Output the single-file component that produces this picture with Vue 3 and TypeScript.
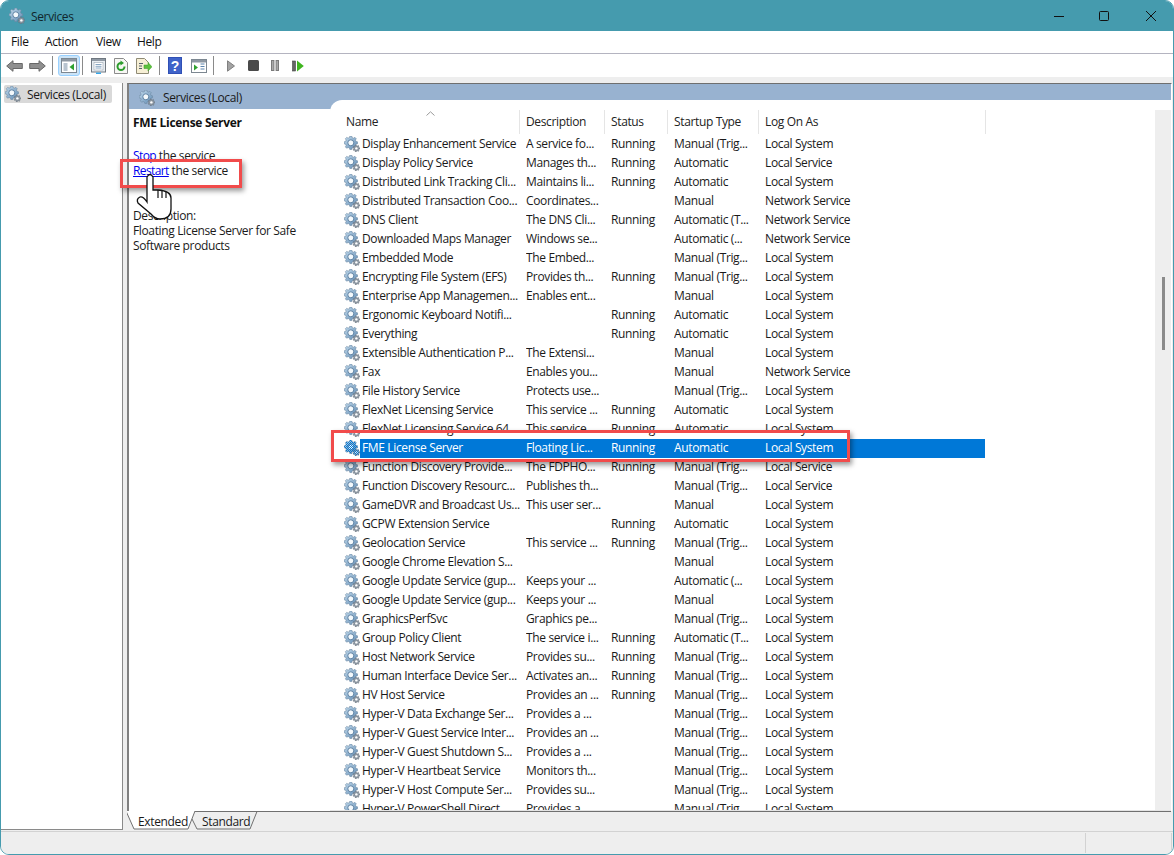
<script setup lang="ts">
interface Row { n: string; d: string; s: string; t: string; l: string }
const LS = 'Local System', LV = 'Local Service', NS = 'Network Service', R = 'Running', A = 'Automatic', M = 'Manual', MT = 'Manual (Trig...'
const rows: Row[] = [
  { n: 'Display Enhancement Service', d: 'A service fo...', s: R, t: MT, l: LS },
  { n: 'Display Policy Service', d: 'Manages th...', s: R, t: A, l: LV },
  { n: 'Distributed Link Tracking Cli...', d: 'Maintains li...', s: R, t: A, l: LS },
  { n: 'Distributed Transaction Coo...', d: 'Coordinates...', s: '', t: M, l: NS },
  { n: 'DNS Client', d: 'The DNS Cli...', s: R, t: 'Automatic (T...', l: NS },
  { n: 'Downloaded Maps Manager', d: 'Windows se...', s: '', t: 'Automatic (...', l: NS },
  { n: 'Embedded Mode', d: 'The Embed...', s: '', t: MT, l: LS },
  { n: 'Encrypting File System (EFS)', d: 'Provides th...', s: R, t: MT, l: LS },
  { n: 'Enterprise App Managemen...', d: 'Enables ent...', s: '', t: M, l: LS },
  { n: 'Ergonomic Keyboard Notifi...', d: '', s: R, t: A, l: LS },
  { n: 'Everything', d: '', s: R, t: A, l: LS },
  { n: 'Extensible Authentication P...', d: 'The Extensi...', s: '', t: M, l: LS },
  { n: 'Fax', d: 'Enables you...', s: '', t: M, l: NS },
  { n: 'File History Service', d: 'Protects use...', s: '', t: MT, l: LS },
  { n: 'FlexNet Licensing Service', d: 'This service ...', s: R, t: A, l: LS },
  { n: 'FlexNet Licensing Service 64', d: 'This service ...', s: R, t: A, l: LS },
  { n: 'FME License Server', d: 'Floating Lic...', s: R, t: A, l: LS },
  { n: 'Function Discovery Provide...', d: 'The FDPHO...', s: R, t: MT, l: LV },
  { n: 'Function Discovery Resourc...', d: 'Publishes th...', s: '', t: MT, l: LV },
  { n: 'GameDVR and Broadcast Us...', d: 'This user ser...', s: '', t: M, l: LS },
  { n: 'GCPW Extension Service', d: '', s: R, t: A, l: LS },
  { n: 'Geolocation Service', d: 'This service ...', s: R, t: MT, l: LS },
  { n: 'Google Chrome Elevation S...', d: '', s: '', t: M, l: LS },
  { n: 'Google Update Service (gup...', d: 'Keeps your ...', s: '', t: 'Automatic (...', l: LS },
  { n: 'Google Update Service (gup...', d: 'Keeps your ...', s: '', t: M, l: LS },
  { n: 'GraphicsPerfSvc', d: 'Graphics pe...', s: '', t: MT, l: LS },
  { n: 'Group Policy Client', d: 'The service i...', s: R, t: 'Automatic (T...', l: LS },
  { n: 'Host Network Service', d: 'Provides su...', s: R, t: MT, l: LS },
  { n: 'Human Interface Device Ser...', d: 'Activates an...', s: R, t: MT, l: LS },
  { n: 'HV Host Service', d: 'Provides an ...', s: R, t: MT, l: LS },
  { n: 'Hyper-V Data Exchange Ser...', d: 'Provides a ...', s: '', t: MT, l: LS },
  { n: 'Hyper-V Guest Service Inter...', d: 'Provides an ...', s: '', t: MT, l: LS },
  { n: 'Hyper-V Guest Shutdown S...', d: 'Provides a ...', s: '', t: MT, l: LS },
  { n: 'Hyper-V Heartbeat Service', d: 'Monitors th...', s: '', t: MT, l: LS },
  { n: 'Hyper-V Host Compute Ser...', d: 'Provides su...', s: '', t: MT, l: LS },
  { n: 'Hyper-V PowerShell Direct ...', d: 'Provides a ...', s: '', t: MT, l: LS },
]
const selected = 'FME License Server'

function gear(cx: number, cy: number, ro: number, ri: number, teeth: number): string {
  const pts: string[] = []
  const step = (Math.PI * 2) / teeth
  for (let i = 0; i < teeth; i++) {
    const a = i * step
    const p = (ang: number, r: number) => `${(cx + Math.cos(ang) * r).toFixed(2)} ${(cy + Math.sin(ang) * r).toFixed(2)}`
    pts.push(p(a - step * 0.32, ri), p(a - step * 0.18, ro), p(a + step * 0.18, ro), p(a + step * 0.32, ri))
  }
  return 'M' + pts.join('L') + 'Z'
}
const bigGear = gear(6.8, 6.8, 6.8, 5.4, 8)
const smallGear = gear(12.4, 12.4, 3.5, 2.6, 7)
</script>

<template>
  <div class="app">
    <svg class="defs" width="0" height="0">
      <defs>
        <linearGradient id="gearFill" x1="0" y1="0" x2="1" y2="1">
          <stop offset="0" stop-color="#c4dcee" />
          <stop offset="1" stop-color="#5f8ab2" />
        </linearGradient>
        <symbol id="svc" viewBox="0 0 16 16">
          <path :d="bigGear" fill="url(#gearFill)" stroke="#6f8aa3" stroke-width="0.6" />
          <circle cx="6.8" cy="6.8" r="3" fill="#f4f9fc" stroke="#55799c" stroke-width="0.9" />
          <path :d="smallGear" fill="#8d98a3" stroke="#5a6672" stroke-width="0.4" />
          <circle cx="12.4" cy="12.4" r="1.2" fill="#fff" />
        </symbol>
        <pattern id="dither" width="2" height="2" patternUnits="userSpaceOnUse">
          <rect width="1" height="1" fill="#0078d7" />
          <rect x="1" y="1" width="1" height="1" fill="#0078d7" />
        </pattern>
      </defs>
    </svg>

    <div class="window">
      <header class="title">
        <svg class="title-ico" width="16" height="16"><use href="#svc" /></svg>
        <span class="title-text">Services</span>
        <div class="controls">
          <svg width="12" height="12" viewBox="0 0 12 12" class="min"><path d="M1 6.5H11" stroke="#111" stroke-width="1" /></svg>
          <svg width="12" height="12" viewBox="0 0 12 12" class="max"><rect x="1.5" y="1.5" width="9" height="9" rx="1" fill="none" stroke="#111" stroke-width="1" /></svg>
          <svg width="12" height="12" viewBox="0 0 12 12" class="close"><path d="M1 1L11 11M11 1L1 11" stroke="#111" stroke-width="1" /></svg>
        </div>
      </header>

      <nav class="menu">
        <span>File</span><span>Action</span><span>View</span><span>Help</span>
      </nav>

      <div class="toolbar">
        <div class="tb ga">
          <button class="btn"><svg width="17" height="12" viewBox="0 0 17 12"><path d="M.7 6L7 .7V3.5H16.3V8.5H7V11.3Z" fill="#8f8f8f" stroke="#686868" /></svg></button>
          <button class="btn"><svg width="17" height="12" viewBox="0 0 17 12"><path d="M16.3 6L10 .7V3.5H.7V8.5H10V11.3Z" fill="#8f8f8f" stroke="#686868" /></svg></button>
        </div>
        <i class="sep"></i>
        <div class="tb gb">
          <button class="btn active">
            <svg width="16" height="15" viewBox="0 0 16 15"><rect x=".5" y=".5" width="15" height="14" fill="#fff" stroke="#7c8791" /><rect x="1" y="1" width="14" height="2.5" fill="#8e98a3" /><rect x="2.5" y="5" width="4" height="8" fill="#b8c4d0" /><path d="M13 5.5V12.5L8.5 9Z" fill="#2fa12f" /></svg>
          </button>
        </div>
        <i class="sep"></i>
        <div class="tb gc">
          <button class="btn">
            <svg width="15" height="16" viewBox="0 0 15 16"><rect x=".5" y=".5" width="14" height="13.5" fill="#e8edf1" stroke="#6f7780" /><rect x="1" y="1" width="13" height="2" fill="#8e98a3" /><rect x="3" y="4.5" width="9" height="7.5" fill="#fff" stroke="#9aa6b1" stroke-width=".6" /><path d="M4.5 6.5H10.5M4.5 8.3H10.5M4.5 10H10.5" stroke="#6a8fb3" stroke-width=".8" /><rect x="5" y="14.5" width="5" height="1.5" fill="#37a6e8" /></svg>
          </button>
          <button class="btn">
            <svg width="14" height="16" viewBox="0 0 14 16"><path d="M.5 .5H9.5L13.5 4.5V15.5H.5Z" fill="#f7f7f4" stroke="#8b8b8b" /><path d="M10.5 8.5A3.5 3.5 0 1 1 7 5" fill="none" stroke="#2c9c2c" stroke-width="2" /><path d="M6.5 2.5L10 5L6.5 7.5Z" fill="#2c9c2c" /></svg>
          </button>
          <button class="btn">
            <svg width="16" height="16" viewBox="0 0 16 16"><path d="M.5 .5H8.5L12.5 4.5V15.5H.5Z" fill="#f6efd5" stroke="#8f8a75" /><path d="M3 5.5H7M3 8H6M3 10.5H6" stroke="#55606b" stroke-width="1" /><path d="M8 7H12V4.5L16 8.8L12 13V10.5H8Z" fill="#5cc23c" stroke="#3d9a28" stroke-width=".5" /></svg>
          </button>
        </div>
        <i class="sep"></i>
        <div class="tb gd">
          <button class="btn">
            <svg width="14" height="17" viewBox="0 0 14 17"><rect width="14" height="17" fill="#2f4fb5" /><rect x="1" y="1" width="12" height="15" fill="#3f63c9" /><text x="7" y="13.5" text-anchor="middle" class="qm">?</text></svg>
          </button>
          <button class="btn">
            <svg width="16" height="14" viewBox="0 0 16 14"><rect x=".5" y=".5" width="15" height="13" fill="#fff" stroke="#7c8791" /><rect x="1" y="1" width="14" height="2.5" fill="#8e98a3" /><path d="M3 5.5V11.5L7 8.5Z" fill="#2fa12f" /><path d="M9.5 5H13.5M9.5 7.5H13.5M9.5 10H13.5" stroke="#5b84ad" stroke-width="1.2" /></svg>
          </button>
        </div>
        <i class="sep"></i>
        <div class="tb ge">
          <button class="btn"><svg width="8" height="12" viewBox="0 0 8 12"><path d="M.5 .8L7.5 6L.5 11.2Z" fill="#a3a3a3" stroke="#808080" /></svg></button>
          <button class="btn"><svg width="11" height="11" viewBox="0 0 11 11"><rect width="11" height="11" rx="1.5" fill="#4a4a4a" /></svg></button>
          <button class="btn"><svg width="8" height="11" viewBox="0 0 8 11"><rect x=".5" y=".5" width="2.4" height="10" fill="#a8a8a8" stroke="#7a7a7a" /><rect x="5.1" y=".5" width="2.4" height="10" fill="#a8a8a8" stroke="#7a7a7a" /></svg></button>
          <button class="btn wide"><svg width="12" height="12" viewBox="0 0 12 12"><rect x=".5" y="1" width="3" height="10" fill="#666" stroke="#444" stroke-width=".6" /><path d="M5 .5L11.8 6L5 11.5Z" fill="#3fb51f" /></svg></button>
        </div>
      </div>

      <main class="main">
        <aside class="tree">
          <div class="tree-item">
            <svg width="16" height="16"><use href="#svc" /></svg>
            <span>Services (Local)</span>
          </div>
        </aside>

        <section class="pane">
          <div class="inner">
            <div class="band">
              <svg width="16" height="16"><use href="#svc" /></svg>
              <span>Services (Local)</span>
            </div>
            <div class="content">
              <div class="details">
                <h1>FME License Server</h1>
                <p class="actions">
                  <span><a class="lnk">Stop</a> the service</span>
                  <span><a class="lnk">Restart</a> the service</span>
                </p>
                <p class="desc">
                  <span>Description:</span>
                  <span>Floating License Server for Safe</span>
                  <span>Software products</span>
                </p>
              </div>
              <div class="listpane">
                <div class="list">
                  <div class="head">
                    <span class="caret"><svg width="9" height="5" viewBox="0 0 9 5"><path d="M.5 4.5L4.5 .8L8.5 4.5" fill="none" stroke="#9a9a9a" /></svg></span>
                    <div class="hc h1">Name</div>
                    <div class="hc h2">Description</div>
                    <div class="hc h3">Status</div>
                    <div class="hc h4">Startup Type</div>
                    <div class="hc h5">Log On As</div>
                  </div>
                  <div class="rows">
                    <div v-for="(r, i) in rows" :key="i" class="row">
                      <div class="ic">
                        <svg width="16" height="16" viewBox="0 0 16 16">
                          <use href="#svc" width="16" height="16" />
                          <template v-if="r.n === selected">
                            <path :d="bigGear" fill="url(#dither)" />
                            <path :d="smallGear" fill="url(#dither)" />
                          </template>
                        </svg>
                      </div>
                      <div class="cells" :class="{ sel: r.n === selected }">
                        <span class="c1">{{ r.n }}</span>
                        <span class="c2">{{ r.d }}</span>
                        <span class="c3">{{ r.s }}</span>
                        <span class="c4">{{ r.t }}</span>
                        <span class="c5">{{ r.l }}</span>
                      </div>
                    </div>
                  </div>
                </div>
                <div class="track"><div class="thumb"></div></div>
              </div>
            </div>
          </div>
          <div class="tabs">
            <svg class="tab-lines" width="1044" height="19" viewBox="0 0 1044 19">
              <path d="M-1 0L7 18H61L68 0Z" fill="#fff" />
              <path d="M-1 0L7 18H61L68 0" fill="none" stroke="#707070" />
              <path d="M65 8L70 18H123L130 .5H1044" fill="none" stroke="#707070" />
              <path d="M68 .5H130" stroke="#707070" />
            </svg>
            <span class="tab t1">Extended</span>
            <span class="tab t2">Standard</span>
          </div>
        </section>
      </main>

      <footer class="status">
        <div class="st s1"></div>
        <div class="st s2"></div>
      </footer>
    </div>

    <div class="hl hl1"></div>
    <div class="hl hl2"></div>
    <svg class="hand" width="40" height="50" viewBox="0 0 40 50">
      <path d="M12 4Q15 -1 18 4L18 17L23 17Q36 18 36 25L36 36Q36 46 25 46Q20 46 16 41L3 30Q1 26 5 24Q8 23 12 29Z" fill="#fff" stroke="#111" stroke-width="1.3" />
      <path d="M23 17V25M27 18V25M31 19V25" fill="none" stroke="#111" stroke-width="1.2" />
    </svg>
  </div>
</template>

<style scoped>
.app {
  position: relative;
  width: 1174px;
  height: 855px;
  font-family: "Open Sans", "Noto Sans", sans-serif;
  font-size: 12px;
  letter-spacing: -0.36px;
  color: #1a1a1a;
  background: #fff;
  overflow: hidden;
}
.defs { position: absolute; }
.window {
  box-sizing: border-box;
  width: 100%;
  height: 100%;
  border: 1px solid #459bae;
  border-radius: 9px;
  overflow: hidden;
  display: flex;
  flex-direction: column;
  background: #eeeeee;
}
.title {
  height: 30px;
  flex: none;
  background: #459bae;
  display: flex;
  align-items: center;
  padding-left: 8px;
}
.title-text { margin-left: 6px; color: #10262c; }
.controls { margin-left: auto; display: flex; align-items: center; margin-right: 16px; }
.controls svg { display: block; }
.min { margin-right: 33px; }
.max { margin-right: 35px; }
.menu {
  box-sizing: border-box;
  height: 23px;
  flex: none;
  background: #fff;
  border-bottom: 1px solid #b4b4c0;
  display: flex;
  align-items: center;
  padding: 0 0 1px 10px;
  color: #111;
}
.menu span { display: block; }
.menu span:nth-child(1) { width: 34px; }
.menu span:nth-child(2) { width: 51px; }
.menu span:nth-child(3) { width: 41px; }
.toolbar {
  height: 23px;
  flex: none;
  background: #fff;
  display: flex;
  align-items: center;
  padding-left: 2px;
}
.tb { display: flex; gap: 1px; }
.btn {
  width: 22px;
  height: 21px;
  padding: 0;
  border: 0;
  background: none;
  display: flex;
  align-items: center;
  justify-content: center;
}
.btn.wide { width: 24px; }
.btn svg { display: block; }
.active {
  background: #cce4f7;
  border: 1px solid #99d1ff;
  border-radius: 3px;
  box-sizing: border-box;
}
.sep { width: 1px; height: 19px; background: #8a8a8a; display: block; }
.ga { margin-right: 4px; }
.gb { margin: 0 2px 0 5px; }
.gc { margin: 0 4px; }
.gd { margin: 0 3px 0 4px; gap: 2px; }
.ge { margin-left: 6px; gap: 0; }
.qm { font: bold 14px "Liberation Sans", sans-serif; fill: #fff; }
.main {
  flex: 1;
  min-height: 0;
  display: flex;
  padding: 6px 1px 0 0;
  background: #eeeeee;
}
.tree {
  box-sizing: border-box;
  width: 122px;
  margin-bottom: 1px;
  background: #fff;
  border-right: 1px solid #8a8a8a;
  border-bottom: 1px solid #8a8a8a;
  padding: 2px 0 0 3px;
  flex: none;
}
.tree-item {
  width: 108px;
  height: 18px;
  background: #d9d9d9;
  border-radius: 2px;
  display: flex;
  align-items: center;
  gap: 6px;
  padding-left: 1px;
  box-sizing: border-box;
}
.pane {
  flex: 1;
  min-width: 0;
  margin-left: 4px;
  display: flex;
  flex-direction: column;
}
.inner {
  flex: 1;
  min-height: 0;
  display: flex;
  flex-direction: column;
  border-top: 1px solid #6f6f6f;
  border-left: 2px solid #808080;
  border-right: 1px solid #fff;
}
.band {
  height: 25px;
  flex: none;
  margin-bottom: -9px;
  background: #98b2d0;
  display: flex;
  align-items: center;
  padding: 2px 0 0 10px;
  box-sizing: border-box;
  gap: 8px;
}
.content {
  flex: 1;
  min-height: 0;
  display: flex;
}
.details {
  width: 201px;
  flex: none;
  margin-top: 9px;
  background: #fff;
  padding: 6px 0 0 4px;
  box-sizing: border-box;
  line-height: 15px;
}
.details h1 {
  margin: 0;
  font-size: 12px;
  font-weight: 700;
  letter-spacing: -0.3px;
  line-height: 16px;
  color: #111;
}
.details p { margin: 0; display: flex; flex-direction: column; }
.actions { margin-top: 17px !important; }
.desc { margin-top: 30px !important; }
.lnk { color: #0000ee; text-decoration: underline; letter-spacing: -0.6px; }
.listpane {
  position: relative;
  flex: 1;
  min-width: 0;
  background: #fff;
  border-top-left-radius: 12px;
  padding-top: 10px;
  display: flex;
  border-bottom: 1px solid #e4e4e4;
  overflow: hidden;
}
.list {
  flex: 1;
  min-width: 0;
  display: flex;
  flex-direction: column;
}
.head {
  position: relative;
  height: 25px;
  flex: none;
  display: flex;
  padding-left: 10px;
}
.caret { position: absolute; left: 96px; top: 1px; line-height: 0; }
.hc {
  box-sizing: border-box;
  height: 24px;
  border-right: 1px solid #e5e5e5;
  padding: 3px 0 0 6px;
  line-height: 18px;
  color: #222;
}
.h1 { width: 180px; }
.h2 { width: 85px; }
.h3 { width: 63px; }
.h4 { width: 91px; }
.h5 { width: 227px; }
.rows { flex: 1; min-height: 0; overflow: hidden; }
.row { display: flex; height: 19px; }
.ic { width: 30px; flex: none; padding: 1px 0 0 14px; box-sizing: border-box; }
.ic svg { display: block; }
.cells {
  width: 625px;
  display: flex;
  line-height: 18px;
  white-space: nowrap;
}
.cells span { display: block; overflow: hidden; flex: none; box-sizing: border-box; }
.sel { background: #0078d7; color: #fff; }
.c1 { width: 166px; padding-left: 2px; }
.c2 { width: 85px; }
.c3 { width: 63px; }
.c4 { width: 91px; }
.c5 { width: 220px; }
.track {
  width: 16px;
  flex: none;
  background: #eeeeee;
  display: flex;
  justify-content: center;
  padding-top: 167px;
  box-sizing: border-box;
}
.thumb { width: 3px; height: 73px; background: #8a8a8a; }
.tabs {
  position: relative;
  height: 20px;
  flex: none;
  display: flex;
  background: #eeeeee;
}
.tab-lines { position: absolute; left: 0; top: 0; }
.tab { position: relative; line-height: 18px; padding-top: 2px; }
.t1 { margin-left: 11px; width: 64px; }
.status {
  height: 23px;
  flex: none;
  box-sizing: border-box;
  border-top: 1px solid #d2d2d2;
  display: flex;
  padding: 1px 0;
  background: #eeeeee;
}
.st { border-right: 1px solid #d2d2d2; }
.s1 { width: 1084px; }
.s2 { width: 85px; }
.hl {
  position: absolute;
  box-sizing: border-box;
  border: 3px solid #f14b4b;
  box-shadow: 2px 3px 5px rgba(0, 0, 0, 0.4);
}
.hl1 { left: 120px; top: 159px; width: 122px; height: 29px; }
.hl2 { left: 331px; top: 430px; width: 519px; height: 32px; }
.hand { position: absolute; left: 135px; top: 173px; }
</style>
